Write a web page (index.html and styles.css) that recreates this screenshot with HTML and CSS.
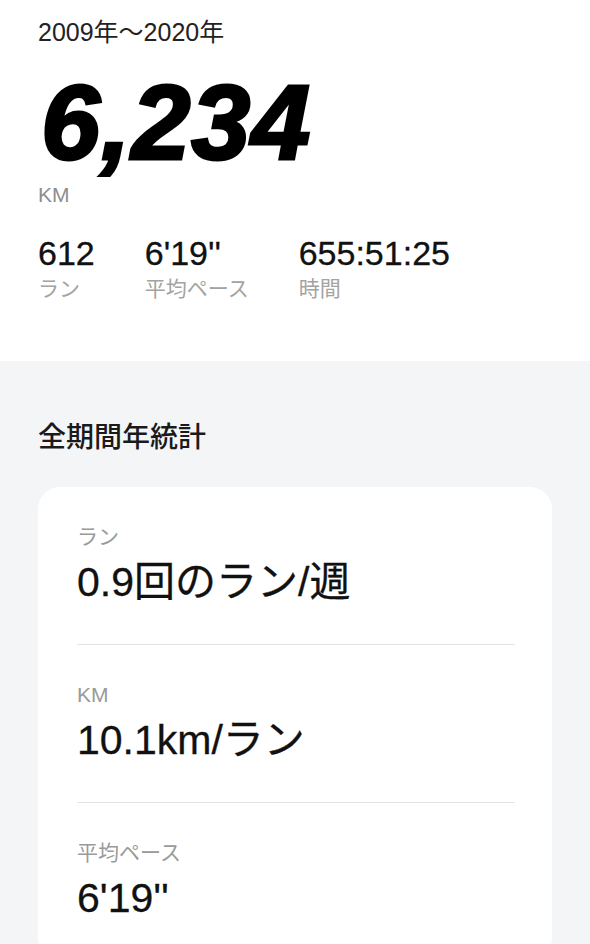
FILE: index.html
```html
<!DOCTYPE html>
<html lang="ja">
<head>
  <meta charset="UTF-8">
  <meta name="viewport" content="width=device-width, initial-scale=1.0">
  <title>全期間</title>
  <link rel="stylesheet" href="styles.css">
</head>
<body>

  <section class="summary">
    <p class="period">2009年〜2020年</p>
    <div class="total">6,234</div>
    <p class="total-unit">KM</p>
    <div class="stats">
      <div class="stat">
        <span class="stat-value">612</span>
        <span class="stat-label">ラン</span>
      </div>
      <div class="stat">
        <span class="stat-value">6'19''</span>
        <span class="stat-label">平均ペース</span>
      </div>
      <div class="stat">
        <span class="stat-value">655:51:25</span>
        <span class="stat-label">時間</span>
      </div>
    </div>
  </section>

  <section class="yearly">
    <h2 class="yearly-title">全期間年統計</h2>
    <div class="card">
      <div class="card-row">
        <span class="row-label">ラン</span>
        <span class="row-value">0.9回のラン/週</span>
      </div>
      <div class="card-row">
        <span class="row-label">KM</span>
        <span class="row-value">10.1km/ラン</span>
      </div>
      <div class="card-row">
        <span class="row-label">平均ペース</span>
        <span class="row-value">6'19''</span>
      </div>
    </div>
  </section>

</body>
</html>
```

FILE: styles.css
```css
* { box-sizing: border-box; margin: 0; padding: 0; }
body { font-family: "Liberation Sans", "Noto Sans CJK JP", sans-serif; color: #111; background: #f4f5f7; }

/* 上部：合計 */
.summary { background: #fff; padding: 17px 38px 59px; }
.period { font-size: 25px; line-height: 30px; color: #222; }
.total { margin-top: 22px; padding-left: 3px; font-size: 106px; line-height: 106px; font-weight: 700; font-style: italic; letter-spacing: 1px; color: #000; -webkit-text-stroke: 3px #000; }
.total-unit { margin-top: 8px; font-size: 21px; line-height: 24px; color: #8e8e8e; }

.stats { display: flex; gap: 50px; margin-top: 26px; }
.stat { display: flex; flex-direction: column; gap: 3px; }
.stat-value { font-size: 34px; line-height: 40px; color: #111; -webkit-text-stroke: 0.3px #111; }
.stat-label { font-size: 21px; line-height: 26px; color: #a3a3a3; }

/* 下部：年統計 */
.yearly { padding: 60px 38px 0; }
.yearly-title { font-size: 28px; line-height: 34px; font-weight: 500; color: #1a1a1a; }

.card { margin-top: 32px; background: #fff; border-radius: 22px; padding: 0 37px 0 39px; }
.card-row { display: flex; flex-direction: column; gap: 8px; padding: 37px 0 38px; border-bottom: 1px solid #e3e3e3; }
.card-row:last-child { border-bottom: none; }
.row-label { font-size: 21px; line-height: 26px; color: #9a9a9a; }
.row-value { font-size: 41px; line-height: 48px; color: #111; -webkit-text-stroke: 0.3px #111; }
```
